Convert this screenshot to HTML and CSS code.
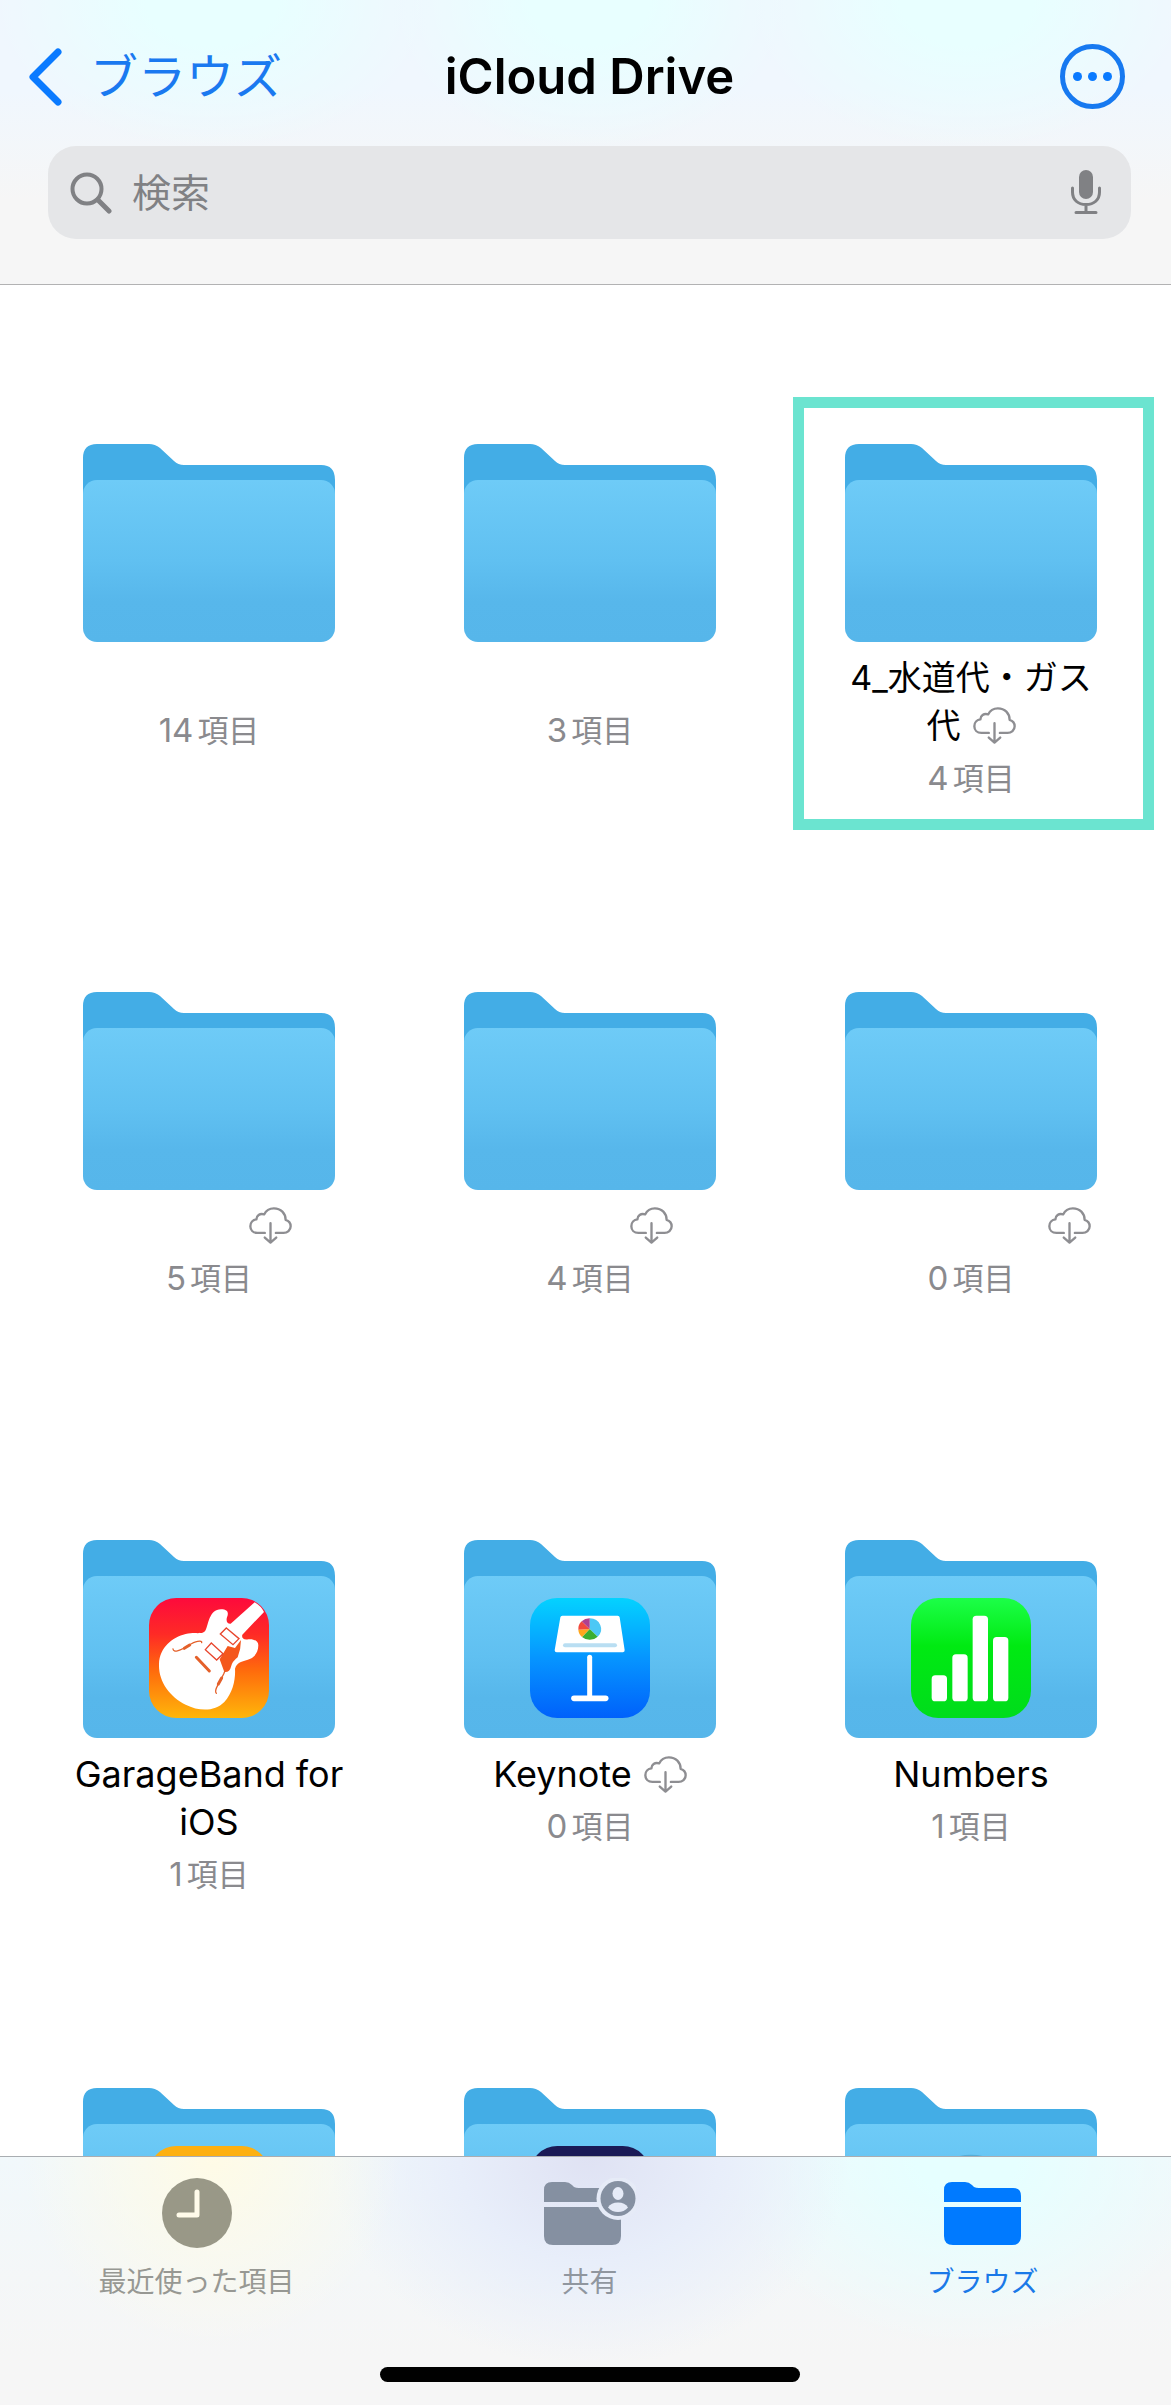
FILE: index.html
```html
<!DOCTYPE html>
<html lang="ja">
<head>
  <meta charset="UTF-8">
  <meta name="viewport" content="width=device-width, initial-scale=1.0">
  <title>iCloud Drive</title>
  <link rel="stylesheet" href="styles.css">
</head>
<body>
  <!-- shared icons -->
  <svg class="sprite" aria-hidden="true">
    <defs>
      <linearGradient id="folderFront" x1="0" y1="0" x2="0" y2="1">
        <stop offset="0" stop-color="#6ecbf7"/>
        <stop offset="0.5" stop-color="#60c0f1"/>
        <stop offset="0.75" stop-color="#57b7eb"/>
        <stop offset="1" stop-color="#56b6ea"/>
      </linearGradient>
      <linearGradient id="garageBg" x1="0" y1="0" x2="0" y2="1">
        <stop offset="0" stop-color="#fd0a3c"/>
        <stop offset="0.3" stop-color="#fe2a26"/>
        <stop offset="0.6" stop-color="#ff6a0c"/>
        <stop offset="1" stop-color="#ffb60a"/>
      </linearGradient>
      <linearGradient id="keynoteBg" x1="0" y1="0" x2="0" y2="1">
        <stop offset="0" stop-color="#04d2ff"/>
        <stop offset="0.5" stop-color="#0695ff"/>
        <stop offset="1" stop-color="#0061fb"/>
      </linearGradient>
      <linearGradient id="numbersBg" x1="0" y1="0" x2="0" y2="1">
        <stop offset="0" stop-color="#1cff48"/>
        <stop offset="0.4" stop-color="#00ea12"/>
        <stop offset="1" stop-color="#00dc1c"/>
      </linearGradient>
    </defs>
    <symbol id="folder" viewBox="0 0 252 198">
      <path fill="#43ade6" d="M0 14Q0 0 14 0H66Q72 0 77 4L91 17Q95 21 101 21H238Q252 21 252 36V110H0Z"/>
      <rect y="36" width="252" height="162" rx="14" fill="url(#folderFront)"/>
    </symbol>
    <symbol id="cloud" viewBox="0 0 128 110">
      <g fill="none" stroke="#8e8e92" stroke-width="7" stroke-linecap="round" stroke-linejoin="round">
        <path d="M47 77H25C12 77 4 68 4 57C4 46 12 38 22 37C22 26 32 18 45 22C51 10 62 4 74 4C95 4 109 19 109 38C119 41 124 49 124 57C124 69 114 77 103 77H80"/>
        <path d="M64 48V104M47 91L64 106L81 91"/>
      </g>
    </symbol>
    <symbol id="folderTab" viewBox="0 0 77 64">
      <path d="M0 9Q0 1 8 1H21Q25 1 28 4L30 6Q32 7 35 7H69Q77 7 77 15V21H0ZM0 26H77V55Q77 64 68 64H9Q0 64 0 55Z"/>
    </symbol>
  </svg>

  <div class="screen">
    <header class="top">
      <div class="navbar">
        <a class="back" href="#">
          <svg width="34" height="58" viewBox="0 0 34 58"><path d="M30 4L5 29L30 54" fill="none" stroke="#0a7aff" stroke-width="7" stroke-linecap="round" stroke-linejoin="round"/></svg>
          <span>ブラウズ</span>
        </a>
        <h1>iCloud Drive</h1>
        <button class="more" type="button" aria-label="その他">
          <svg width="65" height="65" viewBox="0 0 65 65"><circle cx="32.5" cy="32.5" r="30" fill="none" stroke="#1779f0" stroke-width="5"/><g fill="#0a7aff"><circle cx="17.500" cy="32.500" r="4.500"/><circle cx="32.500" cy="32.500" r="4.500"/><circle cx="47.500" cy="32.500" r="4.500"/></g></svg>
        </button>
      </div>
      <div class="search">
        <svg width="42" height="42" viewBox="0 0 42 42"><g fill="none" stroke="#808184" stroke-width="4"><circle cx="17" cy="17" r="14.500"/><path d="M28 28L39 39" stroke-width="5" stroke-linecap="round"/></g></svg>
        <input type="text" placeholder="検索" aria-label="検索">
        <button class="mic" type="button" aria-label="音声入力">
          <svg width="30" height="45" viewBox="0 0 30 45"><rect x="8" y="0" width="14" height="29" rx="7" fill="#808184"/><path d="M1.500 18V22C1.500 30 7 34.500 15 34.500S28.500 30 28.500 22V18M15 35V42M5 42.500H25" fill="none" stroke="#808184" stroke-width="3" stroke-linecap="round"/></svg>
        </button>
      </div>
    </header>

    <main class="files">
      <a class="item" href="#">
        <span class="icon"><svg class="folder"><use href="#folder"/></svg></span>
        <span class="name"></span>
        <span class="count"><span class="num">14</span>項目</span>
      </a>
      <a class="item" href="#">
        <span class="icon"><svg class="folder"><use href="#folder"/></svg></span>
        <span class="name"></span>
        <span class="count"><span class="num">3</span>項目</span>
      </a>
      <a class="item marked" href="#">
        <span class="icon"><svg class="folder"><use href="#folder"/></svg></span>
        <span class="name ja">4_水道代・ガス代<svg class="cloud"><use href="#cloud"/></svg></span>
        <span class="count"><span class="num">4</span>項目</span>
      </a>

      <a class="item" href="#">
        <span class="icon"><svg class="folder"><use href="#folder"/></svg></span>
        <span class="name ja"><span class="blank"></span><svg class="cloud"><use href="#cloud"/></svg></span>
        <span class="count"><span class="num">5</span>項目</span>
      </a>
      <a class="item" href="#">
        <span class="icon"><svg class="folder"><use href="#folder"/></svg></span>
        <span class="name ja"><span class="blank"></span><svg class="cloud"><use href="#cloud"/></svg></span>
        <span class="count"><span class="num">4</span>項目</span>
      </a>
      <a class="item" href="#">
        <span class="icon"><svg class="folder"><use href="#folder"/></svg></span>
        <span class="name ja"><span class="blank long"></span><svg class="cloud"><use href="#cloud"/></svg></span>
        <span class="count"><span class="num">0</span>項目</span>
      </a>

      <a class="item" href="#">
        <span class="icon">
          <svg class="folder"><use href="#folder"/></svg>
          <svg class="app" viewBox="0 0 360 360">
            <rect width="360" height="360" rx="82" fill="url(#garageBg)"/>
            <path fill="#fff" d="M245 77L317 13Q336 24 345 42L280 110C277 120 284 127 298 124C312 122 328 128 328 142C328 162 318 176 304 182C284 190 264 190 258 212C260 244 252 284 226 312C196 342 150 340 110 320C62 296 28 250 30 198C32 148 70 118 110 108C140 101 162 112 170 96C178 82 180 34 216 34C236 34 240 44 234 58C230 70 236 78 245 77Z"/>
            <path fill="#f4571c" d="M276 126L258 150L236 144L212 184L226 222Q242 224 246 206Q250 190 266 178Q276 152 276 126Z"/>
            <g fill="#fff" stroke="#e8452c" stroke-width="4">
              <path d="M232 90L270 122L252 140L214 108ZM187 135L222 167L203 186L169 155Z"/>
            </g>
            <g fill="none" stroke="#e4602a" stroke-linecap="round">
              <path d="M142 178L181 219" stroke-width="9"/>
              <path d="M72 153C74 166 94 156 106 150S130 132 146 130Q160 128 158 134M202 286Q196 280 206 262T224 228L228 218" stroke-width="4"/>
              <path d="M106 151L122 141M208 258L218 240" stroke-width="9"/>
            </g>
          </svg>
        </span>
        <span class="name">GarageBand for iOS</span>
        <span class="count"><span class="num">1</span>項目</span>
      </a>
      <a class="item" href="#">
        <span class="icon">
          <svg class="folder"><use href="#folder"/></svg>
          <svg class="app" viewBox="0 0 360 360">
            <rect width="360" height="360" rx="82" fill="url(#keynoteBg)"/>
            <path d="M97 59H263L278 157H80Z" fill="#fff" stroke="#fff" stroke-width="12" stroke-linejoin="round"/>
            <path d="M105 142H255" stroke="#b9def2" stroke-width="12" stroke-linecap="round"/>
            <path d="M179 93V61A34 32 0 0 1 203 116Z" fill="#4cc8f5"/>
            <path d="M179 93L203 116A34 32 0 0 1 156 117Z" fill="#3aae30"/>
            <path d="M179 93L156 117A34 32 0 0 1 145 95Z" fill="#ffa61c"/>
            <path d="M179 93L145 95A34 32 0 0 1 155 70Z" fill="#f2493c"/>
            <path d="M179 93L155 70A34 32 0 0 1 179 61Z" fill="#b0408f"/>
            <path d="M179 178V298" stroke="#fff" stroke-width="15" stroke-linecap="round"/>
            <path d="M132 301H227" stroke="#fff" stroke-width="17" stroke-linecap="round"/>
          </svg>
        </span>
        <span class="name">Keynote<svg class="cloud"><use href="#cloud"/></svg></span>
        <span class="count"><span class="num">0</span>項目</span>
      </a>
      <a class="item" href="#">
        <span class="icon">
          <svg class="folder"><use href="#folder"/></svg>
          <svg class="app" viewBox="0 0 360 360">
            <rect width="360" height="360" rx="82" fill="url(#numbersBg)"/>
            <g fill="#fff">
              <rect x="62" y="232" width="46" height="78" rx="11"/>
              <rect x="124" y="169" width="46" height="141" rx="11"/>
              <rect x="185" y="53" width="46" height="257" rx="11"/>
              <rect x="246" y="117" width="46" height="193" rx="11"/>
            </g>
          </svg>
        </span>
        <span class="name">Numbers</span>
        <span class="count"><span class="num">1</span>項目</span>
      </a>

      <!-- last row runs under the tab bar -->
      <a class="item" href="#">
        <span class="icon">
          <svg class="folder"><use href="#folder"/></svg>
          <svg class="app" viewBox="0 0 360 360"><rect width="360" height="360" rx="82" fill="#fdb011"/></svg>
        </span>
      </a>
      <a class="item" href="#">
        <span class="icon">
          <svg class="folder"><use href="#folder"/></svg>
          <svg class="app" viewBox="0 0 360 360"><rect width="360" height="360" rx="82" fill="#1a1a56"/></svg>
        </span>
      </a>
      <a class="item" href="#">
        <span class="icon">
          <svg class="folder"><use href="#folder"/></svg>
          <svg class="app" viewBox="0 0 360 360"><circle cx="180" cy="180" r="154" fill="#57add6"/></svg>
        </span>
      </a>
    </main>

    <footer class="bottom">
      <nav class="tabs">
        <a class="tab recent" href="#">
          <svg width="70" height="70" viewBox="0 0 70 70"><circle cx="35" cy="35" r="35" fill="#999887"/><path d="M35 14V37H17" fill="none" stroke="#fffbea" stroke-width="5" stroke-linecap="round" stroke-linejoin="round"/></svg>
          <span>最近使った項目</span>
        </a>
        <a class="tab shared" href="#">
          <svg width="92" height="70" viewBox="0 -3 92 70">
            <use href="#folderTab" width="77" height="64" fill="#8590a1"/>
            <circle cx="74" cy="17.500" r="21.500" fill="#e6ebf7"/>
            <circle cx="74" cy="17.500" r="17.500" fill="#8590a1"/>
            <ellipse cx="74" cy="12.500" rx="5.500" ry="6.500" fill="#e6ebf7"/>
            <path d="M64 26.500Q67 21.500 74 21.500T84 26.500Q80 31 74 31T64 26.500Z" fill="#e6ebf7"/>
          </svg>
          <span>共有</span>
        </a>
        <a class="tab browse" href="#">
          <svg width="77" height="70" viewBox="0 -3 77 70"><use href="#folderTab" width="77" height="64" fill="#007aff"/></svg>
          <span>ブラウズ</span>
        </a>
      </nav>
      <div class="home-bar"></div>
    </footer>
  </div>
</body>
</html>
```
FILE: styles.css
```css
* {
  box-sizing: border-box;
}

body {
  margin: 0;
  background: #fff;
  color: #000;
  font-family: Inter, "Noto Sans CJK JP", sans-serif;
  overflow: hidden;
}

a {
  color: inherit;
  text-decoration: none;
}

button {
  padding: 0;
  border: 0;
  background: none;
  cursor: pointer;
}

svg {
  display: block;
}

.sprite {
  position: absolute;
  width: 0;
  height: 0;
}

/* the screen runs slightly past the right edge */
.screen {
  display: flex;
  flex-direction: column;
  height: 100vh;
  margin-right: -8px;
}

/* header */
.top {
  padding: 44px 48px 45px;
  border-bottom: 1px solid #b2b2b3;
  background:
    radial-gradient(ellipse 220px 150px at 18% 0, #e8ffff 30%, #e8ffff00),
    radial-gradient(ellipse 200px 150px at 50% 0, #e8ffff 30%, #e8ffff00),
    radial-gradient(ellipse 220px 150px at 82% 0, #e8ffff 30%, #e8ffff00),
    linear-gradient(#f0f7fe 90px, #f6f6f6 200px);
}

.navbar {
  display: grid;
  grid-template-columns: 1fr auto 1fr;
  align-items: center;
  height: 65px;
  margin: 0 -20px 37px;
}

.back {
  display: flex;
  align-items: center;
  gap: 28px;
  color: #1a79f0;
  font-size: 48px;
  line-height: 64px;
}

h1 {
  margin: 0;
  font-size: 49px;
  font-weight: 600;
  line-height: 64px;
}

.more {
  justify-self: end;
  margin-right: 26px;
}

.search {
  display: flex;
  align-items: center;
  gap: 20px;
  height: 93px;
  padding: 0 30px 0 22px;
  border-radius: 28px;
  background: #e5e6e8;
}

.search input {
  flex: 1;
  min-width: 0;
  padding: 0;
  border: 0;
  outline: 0;
  background: none;
  color: #000;
  font: inherit;
  font-size: 39px;
}

.search input::placeholder {
  color: #808184;
  opacity: 1;
}

/* folder grid */
.files {
  flex: 1;
  min-height: 0;
  display: grid;
  grid-template-columns: repeat(3, 1fr);
  grid-auto-rows: 548px;
  align-items: start;
  column-gap: 20px;
  padding: 112px 25px 0 31px;
  overflow: hidden;
}

.item {
  display: flex;
  flex-direction: column;
  align-items: center;
  padding: 36px 5px 16px 0;
  border: 11px solid transparent;
}

.marked {
  border-color: #6be4d0;
}

.icon {
  display: grid;
  justify-items: center;
}

.icon > svg {
  grid-area: 1 / 1;
}

.folder {
  width: 252px;
  height: 198px;
}

.app {
  width: 120px;
  height: 120px;
  margin-top: 58px;
}

.name {
  max-width: 270px;
  min-height: 48px;
  margin-top: 12px;
  font-size: 36px;
  line-height: 48px;
  text-align: center;
}

.name.ja {
  font-size: 34px;
}

.cloud {
  display: inline-block;
  width: 43px;
  height: 37px;
  margin-left: 12px;
  vertical-align: -6px;
}

.blank {
  display: inline-block;
  width: 111px;
}

.blank.long {
  width: 185px;
}

.count {
  margin-top: 4px;
  color: #8a8a8e;
  font-size: 31px;
  line-height: 48px;
}

.num {
  margin-right: 4px;
  font-size: 33px;
}

/* tab bar */
.bottom {
  padding: 21px 0 23px;
  border-top: 1px solid #a9adb1;
  background:
    radial-gradient(ellipse 190px 190px at 18% 0, #fffbe6, #fffbe600),
    radial-gradient(ellipse 260px 210px at 50% 0, #dfe2f3, #e8eefa 50%, #eef4fc00),
    radial-gradient(ellipse 250px 190px at 82% 0, #e6ffff 20%, #e6ffff00),
    linear-gradient(#f1f8fb, #f6f6f6 200px);
}

.tabs {
  display: grid;
  grid-template-columns: repeat(3, 1fr);
}

.tab {
  display: flex;
  flex-direction: column;
  align-items: center;
  gap: 16px;
  font-size: 28px;
  line-height: 36px;
}

.recent {
  color: #979893;
}

.shared {
  color: #90969f;
}

.browse {
  color: #1a79e8;
}

.home-bar {
  width: 420px;
  height: 15px;
  margin: 67px auto 0;
  border-radius: 8px;
  background: #000;
}
```
